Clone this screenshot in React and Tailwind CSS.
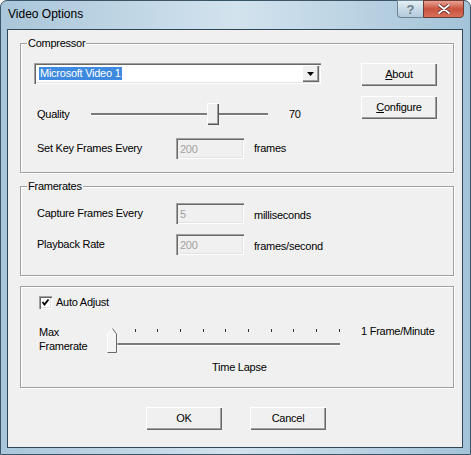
import React from "react";

const font = { fontFamily: '"Liberation Sans", Arial, sans-serif' };

function Btn({ children, className = "" }) {
  return (
    <div
      className={
        "flex items-center justify-center h-[23px] w-[76px] bg-[#f0f0f0] text-[11px] text-black shadow-[inset_1px_1px_0_#ffffff,inset_-1px_-1px_0_#696969,inset_-2px_-2px_0_#a0a0a0] " +
        className
      }
    >
      {children}
    </div>
  );
}

function Field({ value, className = "" }) {
  return (
    <div
      className={
        "h-[21px] w-[68px] flex items-center pl-[4px] pt-[1px] bg-[#f0f0f0] text-[11px] text-[#a0a0a0] shadow-[inset_1px_1px_0_#a0a0a0,inset_2px_2px_0_#696969,inset_-1px_-1px_0_#ffffff,inset_-2px_-2px_0_#e3e3e3] " +
        className
      }
    >
      {value}
    </div>
  );
}

function Group({ label, className = "", children }) {
  return (
    <div
      className={
        "relative w-[434px] border border-[#a0a0a0] shadow-[inset_1px_1px_0_#ffffff,1px_1px_0_#ffffff] " +
        className
      }
    >
      {label && (
        <div className="absolute left-[6px] top-[-8px] px-[1px] bg-[#f0f0f0] text-[11px] leading-[14px] text-black">
          {label}
        </div>
      )}
      {children}
    </div>
  );
}

export default function App() {
  const ticks = [0, 1, 2, 3, 4, 5, 6, 7, 8, 9, 10];
  const tickLefts = [6, 29, 51, 74, 97, 119, 142, 165, 187, 210, 233];
  return (
    <div style={font} className="w-[471px] h-[455px] overflow-hidden">
      <div className="w-[471px] h-[455px] flex flex-col rounded-t-[7px] border border-[#3b5567] bg-gradient-to-r from-[#a9c6da] via-[#d3e3ee] to-[#a3c3d8]">
        {/* title bar */}
        <div className="h-[28px] flex items-start">
          <div className="pl-[7px] pt-[6px] text-[12px] leading-[15px] text-black">Video Options</div>
          <div className="flex-1" />
          <div className="flex mr-[6px] mt-[-1px]">
            <div className="w-[26px] h-[18px] flex items-center justify-center rounded-bl-[4px] border border-[#6d8494] border-r-0 bg-gradient-to-b from-[#e6eff5] via-[#c9dbe7] to-[#b3cadb] text-[13px] font-bold leading-none text-[#6f7e88]">
              ?
            </div>
            <div className="w-[41px] h-[18px] flex items-center justify-center rounded-br-[4px] border border-[#6a3a34] bg-gradient-to-b from-[#e8a293] via-[#c8523e] to-[#d8705a]">
              <svg width="12" height="10" viewBox="0 0 12 10">
                <path d="M1 1 L11 9 M11 1 L1 9" stroke="#5a2a22" strokeWidth="3.4" strokeLinecap="round" />
                <path d="M1 1 L11 9 M11 1 L1 9" stroke="#ffffff" strokeWidth="1.8" strokeLinecap="round" />
              </svg>
            </div>
          </div>
        </div>

        {/* client area */}
        <div className="ml-[6px] mr-[7px] h-[419px] border border-[#2f4656] bg-[#f0f0f0] pl-[12px] pt-[13px] text-black tracking-[-0.25px]">
          {/* Compressor */}
          <Group label="Compressor" className="h-[130px]">
            <div className="flex pt-[19px] pl-[13px]">
              <div className="w-[287px] flex flex-col">
                {/* combobox */}
                <div className="h-[21px] w-[287px] flex items-center bg-white shadow-[inset_1px_1px_0_#a0a0a0,inset_2px_2px_0_#696969,inset_-1px_-1px_0_#ffffff,inset_-2px_-2px_0_#e3e3e3]">
                  <div className="ml-[5px] h-[13px] px-[1px] bg-[#3d8ae0] text-white text-[11px] leading-[13px]">
                    Microsoft Video 1
                  </div>
                  <div className="flex-1" />
                  <div className="mr-[2px] w-[17px] h-[17px] flex items-center justify-center bg-[#f0f0f0] shadow-[inset_1px_1px_0_#ffffff,inset_-1px_-1px_0_#696969,inset_-2px_-2px_0_#a0a0a0]">
                    <svg width="7" height="4" viewBox="0 0 7 4">
                      <path d="M0 0 H7 L3.5 4 Z" fill="#000" />
                    </svg>
                  </div>
                </div>
                {/* quality */}
                <div className="mt-[19px] h-[22px] flex items-center">
                  <div className="w-[57px] pl-[3px] text-[11px]">Quality</div>
                  <div className="relative w-[177px] h-[22px]">
                    <div className="absolute left-0 right-0 top-[10px] h-[3px] border-t-2 border-[#7a7a7a] border-b border-b-white" />
                    <div className="absolute left-[116px] top-0 w-[12px] h-[22px] bg-[#f0f0f0] shadow-[inset_1px_1px_0_#ffffff,inset_-1px_-1px_0_#555555,inset_-2px_-2px_0_#a0a0a0]" />
                  </div>
                  <div className="ml-[21px] text-[11px]">70</div>
                </div>
                {/* key frames */}
                <div className="mt-[13px] h-[21px] flex items-center">
                  <div className="w-[142px] pl-[3px] text-[11px]">Set Key Frames Every</div>
                  <Field value="200" />
                  <div className="ml-[10px] text-[11px]">frames</div>
                </div>
              </div>
              <div className="ml-[40px] flex flex-col">
                <Btn>
                  <span><span className="underline">A</span>bout</span>
                </Btn>
                <Btn className="mt-[10px]">
                  <span><span className="underline">C</span>onfigure</span>
                </Btn>
              </div>
            </div>
          </Group>

          {/* Framerates */}
          <Group label="Framerates" className="mt-[13px] h-[90px]">
            <div className="pt-[16px] pl-[16px] flex flex-col">
              <div className="h-[21px] flex items-center">
                <div className="w-[139px] text-[11px]">Capture Frames Every</div>
                <Field value="5" />
                <div className="ml-[10px] mt-[4px] text-[11px]">milliseconds</div>
              </div>
              <div className="mt-[10px] h-[21px] flex items-center">
                <div className="w-[139px] text-[11px]">Playback Rate</div>
                <Field value="200" />
                <div className="ml-[10px] mt-[4px] text-[11px]">frames/second</div>
              </div>
            </div>
          </Group>

          {/* Auto adjust */}
          <Group className="mt-[10px] h-[102px]">
            <div className="pt-[9px] pl-[18px] flex flex-col">
              <div className="flex items-center h-[13px]">
                <div className="w-[13px] h-[13px] flex items-center justify-center bg-white shadow-[inset_1px_1px_0_#a0a0a0,inset_2px_2px_0_#696969,inset_-1px_-1px_0_#ffffff,inset_-2px_-2px_0_#e3e3e3]">
                  <svg width="9" height="9" viewBox="0 0 9 9">
                    <path d="M1.5 4 L3.5 6.5 L7.5 1.5" stroke="#000" strokeWidth="1.8" fill="none" />
                  </svg>
                </div>
                <div className="ml-[4px] text-[11px]">Auto Adjust</div>
              </div>
              <div className="mt-[16px] flex items-start">
                <div className="w-[67px] text-[11px] leading-[14px]">
                  Max
                  <br />
                  Framerate
                </div>
                <div className="relative w-[240px] h-[28px]">
                  {ticks.map((i) => (
                    <div
                      key={i}
                      className="absolute top-[4px] w-[1px] h-[3px] bg-[#333333]"
                      style={{ left: tickLefts[i] }}
                    />
                  ))}
                  <div className="absolute left-[10px] top-[18px] w-[224px] h-[3px] border-t-2 border-[#7a7a7a] border-b border-b-white" />
                  <svg className="absolute left-[1px] top-[3px]" width="11" height="25" viewBox="0 0 11 25">
                    <path d="M0.5 24.5 V6 L5.5 0.5 L10.5 6 V24.5 Z" fill="#f4f4f4" />
                    <path d="M0.5 24.5 V6 L5.5 0.5" stroke="#ffffff" fill="none" />
                    <path d="M5.5 0.5 L9.5 6 V24.5 H0.5" stroke="#6a6a6a" fill="none" />
                  </svg>
                </div>
                <div className="ml-[15px] mt-[-1px] text-[11px] leading-[14px]">1 Frame/Minute</div>
              </div>
              <div className="mt-[7px] pl-[173px] text-[11px] leading-[14px]">Time Lapse</div>
            </div>
          </Group>

          {/* buttons */}
          <div className="mt-[19px] flex pl-[126px]">
            <Btn>OK</Btn>
            <Btn className="ml-[28px]">Cancel</Btn>
          </div>
        </div>
      </div>
    </div>
  );
}
